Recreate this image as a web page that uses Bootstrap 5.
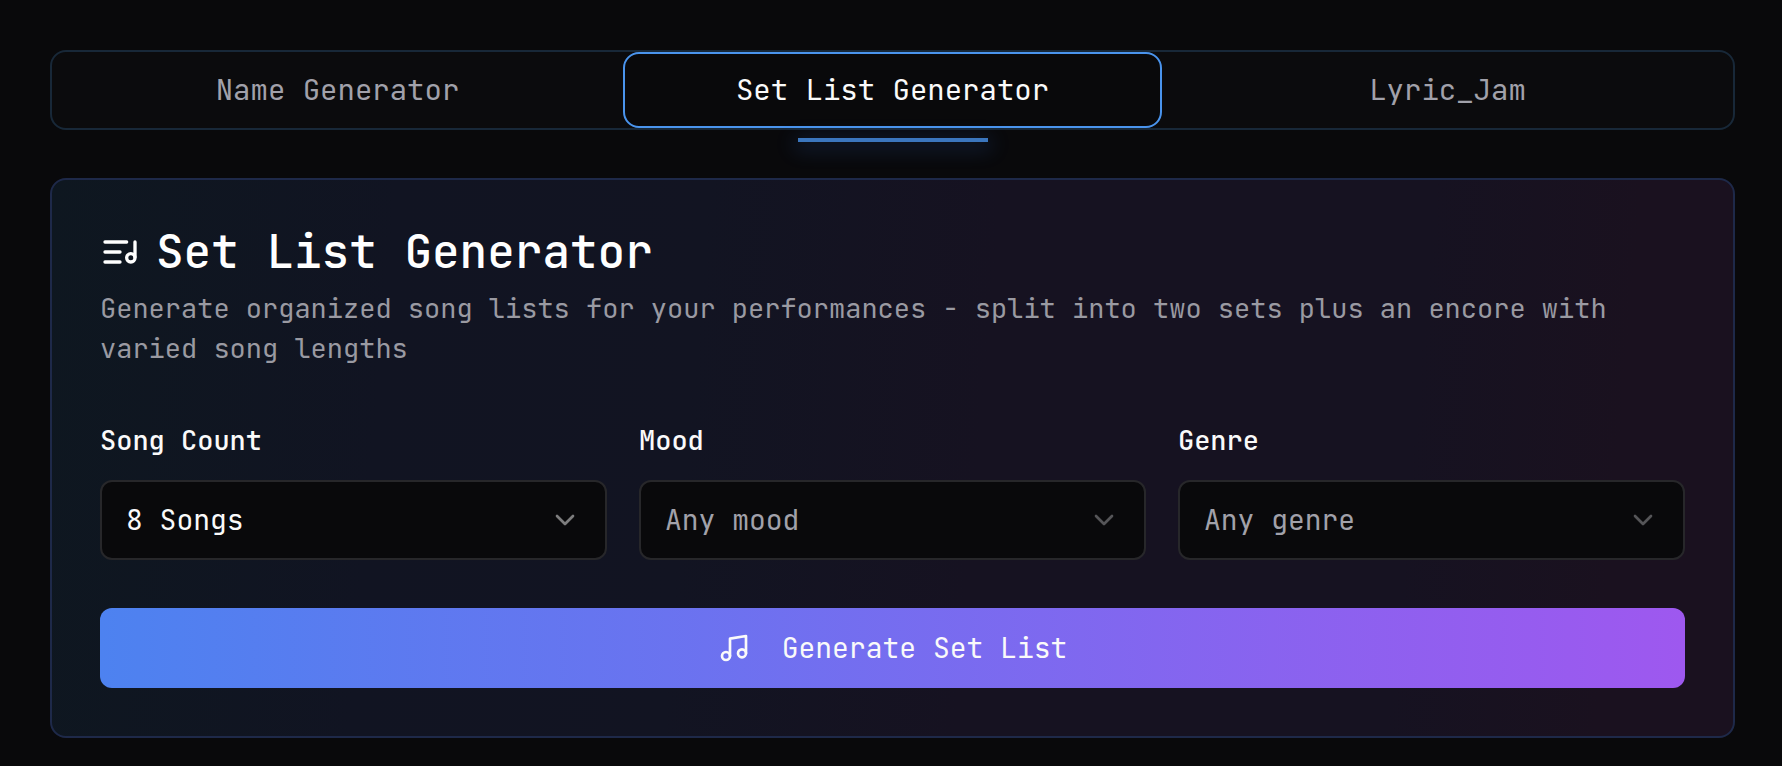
<!DOCTYPE html>
<html lang="en" data-bs-theme="dark">
<head>
<meta charset="utf-8">
<meta name="viewport" content="width=device-width, initial-scale=1">
<title>Set List Generator</title>
<link href="https://cdn.jsdelivr.net/npm/bootstrap@5.3.0/dist/css/bootstrap.min.css" rel="stylesheet">
<style>
  body {
    background: #09090b;
    color: #fafafa;
    font-family: "JetBrains Mono", "DejaVu Sans Mono", monospace;
    font-size: 27px;
    line-height: 40px;
  }
  .page-shell { padding: 50px 47px 28px 50px; }

  .mode-tabs {
    border: 2px solid #182838;
    border-radius: 16px;
    background: #0b0b0d;
    margin-bottom: 48px;
  }
  .mode-tabs .nav-item { flex: 1 1 0; min-width: 0; position: relative; }
  .mode-tabs .nav-item:first-child,
  .mode-tabs .nav-item:last-child { margin: 0 16px; }
  .mode-tabs .nav-link {
    width: 100%;
    height: 76px;
    padding: 0 16px;
    border: 2px solid transparent;
    border-radius: 16px;
    background: transparent;
    color: #a1a1aa;
    font-size: 29px;
  }
  .mode-tabs .nav-link.active {
    color: #fafafa;
    background: #09090b;
    border-color: #4a94ed;
  }
  .tab-glow {
    position: absolute;
    left: 50%;
    bottom: -14px;
    width: 190px;
    height: 4px;
    margin-left: -95px;
    background: #3b76bd;
    box-shadow: 0 4px 20px 4px rgba(59, 130, 246, .18);
  }

  .generator-panel {
    border: 2px solid #1e2949;
    border-radius: 16px;
    padding: 48px;
    background: linear-gradient(95deg, #0e1720 0%, #111422 20%, #121422 38%, #161221 55%, #161221 80%, #1a111f 92%);
  }
  .panel-title {
    font-size: 46px;
    line-height: 48px;
    font-weight: 500;
    gap: 16px;
  }
  .panel-copy { color: #9a9aa2; margin: 12px 0 48px; }
  .line-icon {
    fill: none;
    stroke: currentColor;
    stroke-width: 2;
    stroke-linecap: round;
    stroke-linejoin: round;
    flex: none;
  }
  .field-row { --bs-gutter-x: 32px; margin-bottom: 48px; }
  .field-row .form-label { display: block; line-height: 48px; margin-bottom: 16px; font-weight: 500; }
  .field-row .form-select {
    height: 80px;
    padding: 0 72px 0 24px;
    border: 2px solid #27272a;
    border-radius: 12px;
    color: #fafafa;
    font-size: 28px;
    background-color: #09090b;
    background-image: url("data:image/svg+xml,%3Csvg xmlns='http://www.w3.org/2000/svg' viewBox='0 0 24 24' fill='none' stroke='%237d7d7e' stroke-width='2' stroke-linecap='round' stroke-linejoin='round'%3E%3Cpath d='m6 9 6 6 6-6'/%3E%3C/svg%3E");
    background-position: right 24px center;
    background-size: 32px 32px;
  }
  .field-row .form-select.is-empty {
    color: #a1a1aa;
    background-image: url("data:image/svg+xml,%3Csvg xmlns='http://www.w3.org/2000/svg' viewBox='0 0 24 24' fill='none' stroke='%23555558' stroke-width='2' stroke-linecap='round' stroke-linejoin='round'%3E%3Cpath d='m6 9 6 6 6-6'/%3E%3C/svg%3E");
  }
  .generate-btn {
    min-height: 80px;
    gap: 32px;
    border: 0;
    border-radius: 12px;
    color: #fafafa;
    font-size: 28px;
    background: linear-gradient(90deg, #4d82f0, #9e58ef);
  }
  .generate-btn:hover { color: #fff; }
</style>
</head>
<body>
<main class="page-shell">
  <ul class="nav mode-tabs flex-nowrap" role="tablist">
    <li class="nav-item" role="presentation">
      <button class="nav-link" type="button" role="tab" aria-selected="false">Name Generator</button>
    </li>
    <li class="nav-item" role="presentation">
      <button class="nav-link active" type="button" role="tab" aria-selected="true">Set List Generator</button>
      <span class="tab-glow"></span>
    </li>
    <li class="nav-item" role="presentation">
      <button class="nav-link" type="button" role="tab" aria-selected="false">Lyric_Jam</button>
    </li>
  </ul>

  <section class="generator-panel">
    <h1 class="panel-title d-flex align-items-center mb-0">
      <svg class="line-icon" width="40" height="40" viewBox="0 0 24 24" aria-hidden="true">
        <path d="M21 15V6M16 6H3M12 12H3M12 18H3"/><circle cx="18.5" cy="15.5" r="2.5"/>
      </svg>
      <span>Set List Generator</span>
    </h1>
    <p class="panel-copy">Generate organized song lists for your performances - split into two sets plus an encore with varied song lengths</p>

    <form>
      <div class="row field-row">
        <div class="col-12 col-lg-4">
          <label class="form-label" for="songCount">Song Count</label>
          <select class="form-select" id="songCount">
            <option>8 Songs</option>
          </select>
        </div>
        <div class="col-12 col-lg-4">
          <label class="form-label" for="mood">Mood</label>
          <select class="form-select is-empty" id="mood">
            <option>Any mood</option>
          </select>
        </div>
        <div class="col-12 col-lg-4">
          <label class="form-label" for="genre">Genre</label>
          <select class="form-select is-empty" id="genre">
            <option>Any genre</option>
          </select>
        </div>
      </div>
      <button class="btn generate-btn w-100 d-flex align-items-center justify-content-center" type="button">
        <svg class="line-icon" width="32" height="32" viewBox="0 0 24 24" aria-hidden="true">
          <path d="M9 18V5l12-2v13"/><circle cx="6" cy="18" r="3"/><circle cx="18" cy="16" r="3"/>
        </svg>
        <span>Generate Set List</span>
      </button>
    </form>
  </section>
</main>
<script src="https://cdn.jsdelivr.net/npm/bootstrap@5.3.0/dist/js/bootstrap.bundle.min.js"></script>
</body>
</html>
